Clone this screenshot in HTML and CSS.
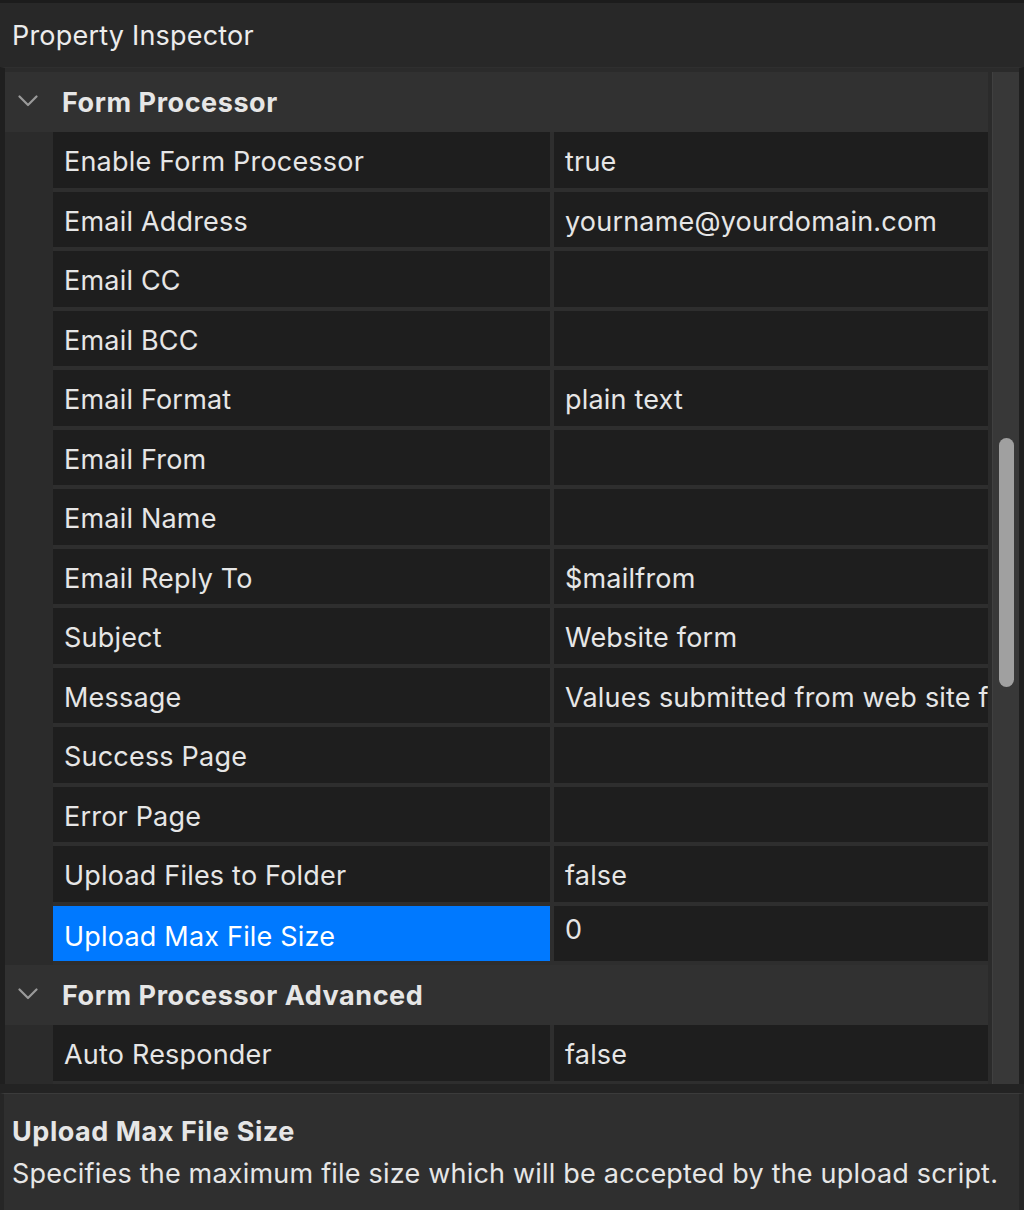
FILE: index.html
```html
<!DOCTYPE html>
<html>
<head>
<meta charset="utf-8">
<link rel="stylesheet" href="styles.css">
</head>
<body>
<div class="window">
  <div class="titlebar">Property Inspector</div>
  <div class="main">
    <div class="list">
      <div class="group">
        <div class="group-header">
          <svg class="chev" width="20" height="12" viewBox="0 0 20 12"><path d="M1.5 1.5 L10 10 L18.5 1.5" fill="none" stroke="#9a9a9a" stroke-width="2.2" stroke-linecap="round" stroke-linejoin="round"/></svg>
          <span class="group-title">Form Processor</span>
        </div>
        <div class="rows">
          <div class="row"><div class="label">Enable Form Processor</div><div class="value">true</div></div>
          <div class="row"><div class="label">Email Address</div><div class="value">yourname@yourdomain.com</div></div>
          <div class="row"><div class="label">Email CC</div><div class="value"></div></div>
          <div class="row"><div class="label">Email BCC</div><div class="value"></div></div>
          <div class="row"><div class="label">Email Format</div><div class="value">plain text</div></div>
          <div class="row"><div class="label">Email From</div><div class="value"></div></div>
          <div class="row"><div class="label">Email Name</div><div class="value"></div></div>
          <div class="row"><div class="label">Email Reply To</div><div class="value">$mailfrom</div></div>
          <div class="row"><div class="label">Subject</div><div class="value">Website form</div></div>
          <div class="row"><div class="label">Message</div><div class="value">Values submitted from web site form</div></div>
          <div class="row"><div class="label">Success Page</div><div class="value"></div></div>
          <div class="row"><div class="label">Error Page</div><div class="value"></div></div>
          <div class="row"><div class="label">Upload Files to Folder</div><div class="value">false</div></div>
          <div class="row selected"><div class="label">Upload Max File Size</div><div class="value editing">0</div></div>
        </div>
      </div>
      <div class="group">
        <div class="group-header">
          <svg class="chev" width="20" height="12" viewBox="0 0 20 12"><path d="M1.5 1.5 L10 10 L18.5 1.5" fill="none" stroke="#9a9a9a" stroke-width="2.2" stroke-linecap="round" stroke-linejoin="round"/></svg>
          <span class="group-title">Form Processor Advanced</span>
        </div>
        <div class="rows">
          <div class="row"><div class="label">Auto Responder</div><div class="value">false</div></div>
        </div>
      </div>
    </div>
    <div class="scrollbar"><div class="thumb"></div></div>
  </div>
  <div class="desc">
    <div class="desc-title">Upload Max File Size</div>
    <div class="desc-text">Specifies the maximum file size which will be accepted by the upload script.</div>
  </div>
</div>
</body>
</html>
```

FILE: styles.css
```css
html, body {
  margin: 0;
  padding: 0;
  background: #232323;
}
body {
  font-family: Inter, "Noto Sans", sans-serif;
  color: #e4e4e4;
}
.window {
  width: 1024px;
  height: 1210px;
  display: flex;
  flex-direction: column;
  overflow: hidden;
}
.titlebar {
  height: 64px;
  border-top: 3px solid #1c1c1c;
  background: #282828;
  font-size: 27px;
  line-height: 66px;
  padding-left: 12px;
  color: #ececec;
  letter-spacing: 0.2px;
}
.main {
  display: flex;
  height: 1017px;
  background: #2b2b2b;
  border-left: 5px solid #1f1f1f;
  border-right: 5px solid #1f1f1f;
  border-top: 1px solid #2f2f2f;
  box-sizing: border-box;
  padding-top: 4px;
}
.list {
  width: 983px;
  overflow: hidden;
  display: flex;
  flex-direction: column;
}
.group-header {
  height: 60px;
  background: #313131;
  display: flex;
  align-items: center;
  padding-left: 13px;
}
.chev {
  display: block;
  margin-top: -3px;
}
.group-title {
  margin-left: 24px;
  font-size: 27px;
  font-weight: 700;
  color: #e6e6e6;
  letter-spacing: 0.55px;
}
.rows {
  margin-left: 48px;
  background: #2e2e2e;
  display: flex;
  flex-direction: column;
  gap: 4px;
  padding-bottom: 4px;
}
.row {
  height: 55.5px;
  display: grid;
  grid-template-columns: 497px 1fr;
  column-gap: 4px;
}
.label, .value {
  background: #1e1e1e;
  font-size: 27px;
  line-height: 59px;
  padding-left: 11px;
  white-space: nowrap;
  overflow: hidden;
  color: #e6e6e6;
  letter-spacing: 0.2px;
}
.row.selected .label {
  background: #0079ff;
  color: #ffffff;
  line-height: 62px;
}
.value.editing {
  line-height: 48px;
}
.scrollbar {
  width: 27px;
  margin-left: 4px;
  background: #383838;
  border-left: 1px solid #404040;
  box-sizing: border-box;
  height: 1012px;
  padding-top: 366px;
}
.thumb {
  width: 15px;
  height: 249px;
  margin-left: 6px;
  border-radius: 8px;
  background: #a0a0a0;
}
.desc {
  flex: 1;
  margin-top: 9px;
  background: #2f2f2f;
  border-top: 1px solid #3b3b3b;
  border-left: 4px solid #262626;
  border-right: 5px solid #262626;
  padding-left: 8px;
}
.desc-title {
  font-size: 27px;
  font-weight: 700;
  margin-top: 22px;
  line-height: 32px;
  color: #e6e6e6;
  letter-spacing: 0.55px;
}
.desc-text {
  font-size: 27px;
  line-height: 34px;
  margin-top: 9px;
  color: #e6e6e6;
  letter-spacing: 0.2px;
  white-space: nowrap;
}
```
